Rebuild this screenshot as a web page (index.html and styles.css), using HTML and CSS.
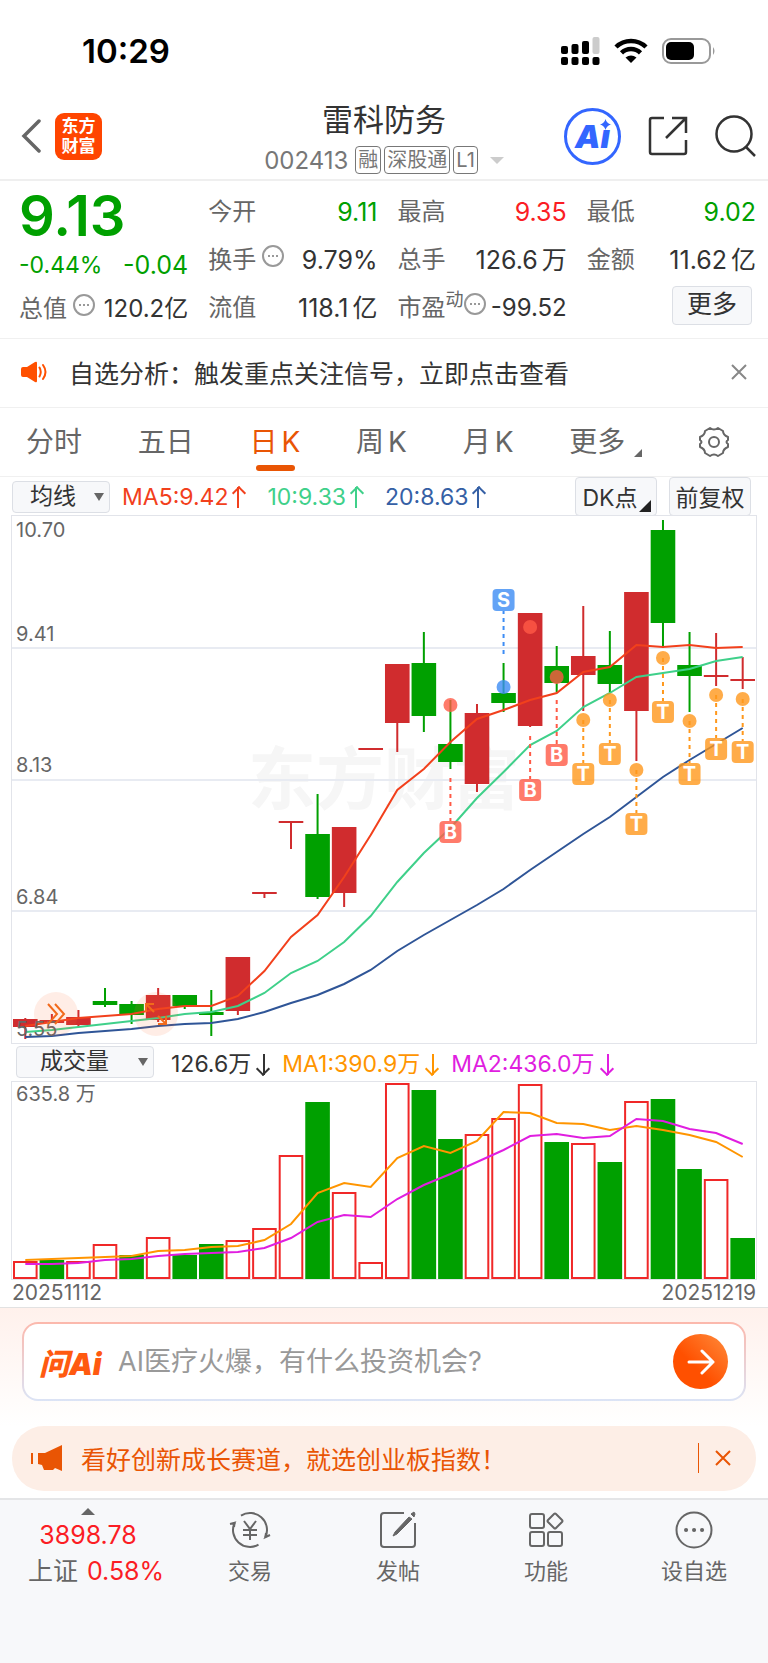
FILE: index.html
```html
<!DOCTYPE html>
<html lang="zh-CN">

<head>
    <meta charset="UTF-8">
    <meta name="viewport" content="width=device-width, initial-scale=1.0">
    <title>雷科防务</title>
    <link rel="stylesheet" href="styles.css">
</head>

<body>
    <div class="status-bar">
        <span class="time">10:29</span>
        <div class="status-icons">
            <svg class="signal" width="39" height="28" viewBox="0 0 39 28">
                <rect x="0" y="9" width="7" height="8" rx="2" />
                <rect x="10.500" y="7" width="7" height="10" rx="2" />
                <rect x="21" y="4" width="7" height="13" rx="2" />
                <rect x="31.500" y="0" width="7" height="17" rx="2" fill="#ccc" />
                <rect x="0" y="20" width="7" height="8" rx="2" />
                <rect x="10.500" y="20" width="7" height="8" rx="2" />
                <rect x="21" y="20" width="7" height="8" rx="2" />
                <rect x="31.500" y="20" width="7" height="8" rx="2" />
            </svg>
            <svg width="34" height="25" viewBox="0 0 34 25" fill="none" stroke="#000" stroke-width="4.500">
                <path d="M2 9a21.500 21.500 0 0 1 30 0" />
                <path d="M7.500 14.800a13.500 13.500 0 0 1 19 0" />
                <path d="M11.500 19.500Q17 15.500 22.500 19.500L17 25z" fill="#000" stroke="none" />
            </svg>
            <svg width="54" height="26" viewBox="0 0 54 26">
                <rect x="1" y="1" width="47" height="24" rx="8" fill="none" stroke="#999" stroke-width="2" />
                <rect x="4" y="4" width="28" height="18" rx="5" />
                <path d="M51 9q3 4 0 8z" fill="#999" />
            </svg>
        </div>
    </div>

    <header class="nav">
        <div class="nav-left">
            <button class="icon-btn" aria-label="返回">
                <svg width="20" height="36" viewBox="0 0 20 36" fill="none" stroke="#666" stroke-width="3.500"
                    stroke-linecap="round">
                    <path d="M18 3L3 18l15 15" />
                </svg>
            </button>
            <a class="logo" href="#">东方<br>财富</a>
        </div>
        <div class="nav-title">
            <h1>雷科防务</h1>
            <div class="code">
                <span>002413</span>
                <span class="badge">融</span>
                <span class="badge">深股通</span>
                <span class="badge">L1</span>
                <i class="caret"></i>
            </div>
        </div>
        <div class="nav-right">
            <button class="ai-btn" aria-label="Ai">
                <span>Ai</span>
                <svg class="star" width="11" height="11" viewBox="0 0 10 10" fill="#36f">
                    <path d="M5 0Q6 4 10 5Q6 6 5 10Q4 6 0 5Q4 4 5 0z" />
                </svg>
            </button>
            <button class="icon-btn" aria-label="分享">
                <svg width="40" height="40" viewBox="0 0 40 40" fill="none" stroke="#333" stroke-width="2.500">
                    <path d="M16 2H4Q2 2 2 4V36Q2 38 4 38H36Q38 38 38 36V24M24 2H38V17M38 2L18 22" />
                </svg>
            </button>
            <button class="icon-btn" aria-label="搜索">
                <svg width="41" height="42" viewBox="0 0 41 42" fill="none" stroke="#333" stroke-width="2.500">
                    <circle cx="19" cy="19" r="17.500" />
                    <path d="M31 32l9 9" />
                </svg>
            </button>
        </div>
    </header>

    <section class="quote">
        <div class="quote-main">
            <div class="price">9.13</div>
            <div class="change"><span class="rate">-0.44%</span><span>-0.04</span></div>
            <div class="item">
                <span class="label">总值</span>
                <i class="more-dot"></i>
                <span class="value compact">120.2亿</span>
            </div>
        </div>
        <div class="quote-grid">
            <div class="item"><span class="label">今开</span><span class="value down">9.11</span></div>
            <div class="item"><span class="label">最高</span><span class="value up">9.35</span></div>
            <div class="item"><span class="label">最低</span><span class="value down">9.02</span></div>
            <div class="item"><span class="label">换手</span><i class="more-dot"></i><span
                    class="value">9.79%</span></div>
            <div class="item"><span class="label">总手</span><span class="value">126.6<span
                        class="unit">万</span></span></div>
            <div class="item"><span class="label">金额</span><span class="value">11.62<span
                        class="unit">亿</span></span></div>
            <div class="item"><span class="label">流值</span><span class="value">118.1<span
                        class="unit">亿</span></span></div>
            <div class="item"><span class="label">市盈<sup>动</sup></span><i class="more-dot"></i><span
                    class="value compact">-99.52</span></div>
            <div class="item"><button class="btn-more">更多</button></div>
        </div>
    </section>

    <div class="notice">
        <svg width="26" height="22" viewBox="0 0 26 22" fill="#ff5000">
            <path d="M2 6H6L14 1Q16 0 16 2V20Q16 22 14 21L6 16H2Q0 16 0 14V8Q0 6 2 6z" />
            <path d="M18.500 6.500Q21 11 18.500 15.500M22 4Q27 11 22 18" fill="none" stroke="#ff5000" stroke-width="2"
                stroke-linecap="round" />
        </svg>
        <a href="#">自选分析：触发重点关注信号，立即点击查看</a>
        <button class="icon-btn" aria-label="关闭">
            <svg width="16" height="16" viewBox="0 0 16 16" stroke="#888" stroke-width="2">
                <path d="M1 1l14 14M15 1L1 15" />
            </svg>
        </button>
    </div>

    <nav class="tabs">
        <button>分时</button>
        <button>五日</button>
        <button class="active">日<span class="unit">K</span></button>
        <button>周<span class="unit">K</span></button>
        <button>月<span class="unit">K</span></button>
        <button class="tab-more">更多</button>
        <button class="gear" aria-label="设置">
            <svg width="32" height="32" viewBox="0 0 32 32" fill="none" stroke="#666" stroke-width="2">
                <path
                    d="M12 2Q16 5 20 2L25 5Q25 9 30 11V14Q27 16 30 18V21Q25 23 25 27L20 30Q16 27 12 30L7 27Q7 23 2 21V18Q5 16 2 14V11Q7 9 7 5z"
                    stroke-linejoin="round" />
                <circle cx="16" cy="16" r="5" />
            </svg>
        </button>
    </nav>

    <div class="ma-bar">
        <div class="select select-ma">
            <select aria-label="指标">
                <option>均线</option>
            </select>
        </div>
        <span class="ma5">MA5:9.42<i class="arrow"></i></span>
        <span class="ma10">10:9.33<i class="arrow"></i></span>
        <span class="ma20">20:8.63<i class="arrow"></i></span>
        <div class="ma-btns">
            <button class="dk">DK点</button>
            <button>前复权</button>
        </div>
    </div>

    <main class="charts">
        <div class="k-wrap">
            <svg class="k-chart" viewBox="0 0 744 527"></svg>
            <div class="chart-tools">
                <button aria-label="展开">
                    <svg width="20" height="22" viewBox="0 0 20 22" fill="none" stroke="#f26a1b" stroke-width="2">
                        <path d="M2 1l9 10-9 10M9 1l9 10-9 10" />
                    </svg>
                </button>
                <button aria-label="全屏">
                    <svg width="22" height="22" viewBox="0 0 22 22" fill="none" stroke="#f26a1b" stroke-width="2">
                        <path d="M9 1H1V9M1 1l8 8M13 21H21V13M21 21l-8-8" />
                    </svg>
                </button>
            </div>
        </div>
        <div class="vol-bar">
            <div class="select select-vol">
                <select aria-label="副图指标">
                    <option>成交量</option>
                </select>
            </div>
            <span>126.6万<i class="arrow arrow-down"></i></span>
            <span class="vol-ma1">MA1:390.9万<i class="arrow arrow-down"></i></span>
            <span class="vol-ma2">MA2:436.0万<i class="arrow arrow-down"></i></span>
        </div>
        <svg class="vol-chart" viewBox="0 0 744 197"></svg>
        <div class="dates"><span>20251112</span><span>20251219</span></div>
    </main>

    <section class="ask">
        <form class="ask-box">
            <label for="ask-input">问Ai</label>
            <input id="ask-input" type="text" placeholder="AI医疗火爆，有什么投资机会?">
            <button type="button" aria-label="发送">
                <svg width="28" height="26" viewBox="0 0 28 26" fill="none" stroke="#fff" stroke-width="3"
                    stroke-linecap="round" stroke-linejoin="round">
                    <path d="M2 13H26M15 2l11 11-11 11" />
                </svg>
            </button>
        </form>
    </section>

    <div class="banner">
        <svg width="31" height="26" viewBox="0 0 31 26" fill="#e95504">
            <path d="M0 8H2V19H0zM7 8H14L31 0V26L24 23L22 25H13L11 20L7 19z" />
        </svg>
        <a href="#">看好创新成长赛道，就选创业板指数！</a>
        <button class="icon-btn" aria-label="关闭">
            <svg width="16" height="16" viewBox="0 0 16 16" stroke="#e95504" stroke-width="2">
                <path d="M1 1l14 14M15 1L1 15" />
            </svg>
        </button>
    </div>

    <footer class="footer">
        <a class="index" href="#">
            <i class="caret caret-up"></i>
            <span class="up">3898.78</span>
            <span class="index-rate">上证 <b class="up">0.58%</b></span>
        </a>
        <a href="#">
            <svg width="42" height="38" viewBox="0 0 42 38" fill="none" stroke="#666" stroke-width="2">
                <path d="M12 4.600A17 17 0 0 1 36.400 26.200L41 24M29.500 33.700A17 17 0 0 1 5.600 11.800L1 13" />
                <path d="M36.400 26.200L37 22M5.600 11.800L5 16" />
                <path d="M15 10l6 8 6-8M14 19H28M14 24H28M21 18V29" />
            </svg>
            交易
        </a>
        <a href="#">
            <svg width="38" height="38" viewBox="0 0 38 38" fill="none" stroke="#666" stroke-width="2">
                <path d="M25 2H5Q2 2 2 5V33Q2 36 5 36H33Q36 36 36 33V12" />
                <path d="M16 21L30 6L33 8L18 23L14 25zM32 3L35 1L36 3L35 6z" fill="#666" stroke-width="1" />
            </svg>
            发帖
        </a>
        <a href="#">
            <svg width="36" height="38" viewBox="0 0 36 38" fill="none" stroke="#666" stroke-width="2">
                <rect x="2" y="3" width="14" height="14" rx="2" />
                <rect x="2" y="21" width="14" height="14" rx="2" />
                <rect x="20" y="21" width="14" height="14" rx="2" />
                <path d="M26 3Q27 2 28 3L34 9Q35 10 34 11L28 17Q27 18 26 17L20 11Q19 10 20 9z" />
            </svg>
            功能
        </a>
        <a href="#">
            <svg width="38" height="38" viewBox="0 0 38 38" fill="none" stroke="#666" stroke-width="2">
                <circle cx="19" cy="19" r="17.500" />
                <path d="M11 19h.1M19 19h.1M27 19h.1" stroke-width="4" stroke-linecap="round" />
            </svg>
            设自选
        </a>
    </footer>
    <script src="chart.js"></script>
</body>

</html>
```
FILE: styles.css
```css
* {
    box-sizing: border-box;
}

body {
    margin: 0;
    min-height: 100vh;
    display: flex;
    flex-direction: column;
    background-color: #fff;
    color: #333;
    font-family: Inter, "Noto Sans CJK SC", sans-serif;
    font-size: 24px;
}

button,
select,
input {
    font: inherit;
    color: inherit;
    border: 0;
    padding: 0;
    background: none;
    outline: none;
}

button {
    cursor: pointer;
}

a {
    color: inherit;
    text-decoration: none;
}

svg {
    display: block;
    flex: none;
}

.up {
    color: #fb1d24;
}

.down {
    color: #00a000;
}

.icon-btn {
    display: flex;
}

/* 状态栏 */
.status-bar {
    height: 103px;
    padding: 0 52px 2px 82px;
    display: flex;
    align-items: center;
    justify-content: space-between;
}

.time {
    font-size: 33px;
    font-weight: 600;
    color: #000;
}

.status-icons {
    display: flex;
    align-items: center;
    gap: 14px;
}

/* 顶部导航 */
.nav {
    height: 78px;
    padding: 0 12px;
    display: grid;
    grid-template-columns: 1fr auto 1fr;
    align-items: center;
    border-bottom: 2px solid #efefef;
}

.nav-left,
.nav-right {
    display: flex;
    align-items: center;
    padding-bottom: 10px;
}

.nav-left {
    gap: 14px;
    padding-left: 9px;
}

.nav-right {
    justify-content: flex-end;
    gap: 27px;
}

.logo {
    width: 47px;
    height: 47px;
    padding-top: 3px;
    border-radius: 9px;
    background-color: #ff4500;
    color: #fff;
    font-size: 17px;
    font-weight: 700;
    line-height: 20px;
    text-align: center;
}

.nav-title {
    text-align: center;
}

.nav-title h1 {
    margin: 0;
    font-size: 31px;
    font-weight: 400;
    line-height: 34px;
}

.code {
    display: flex;
    align-items: center;
    justify-content: center;
    gap: 3px;
    height: 38px;
    margin-top: 4px;
    font-size: 24px;
    color: #777;
}

.badge {
    padding: 0 2px;
    border: 1px solid #777;
    border-radius: 4px;
    font-size: 20px;
    line-height: 26px;
}

.code .badge:nth-child(2) {
    margin-left: 4px;
}

.caret {
    border: 7px solid transparent;
    border-top-color: #ccc;
    border-bottom: 0;
}

.code .caret {
    margin-left: 9px;
}

.ai-btn {
    position: relative;
    width: 57px;
    height: 57px;
    padding-top: 2px;
    border: 3px solid #36f;
    border-radius: 50%;
    color: #36f;
    font-size: 32px;
    font-style: italic;
    font-weight: 900;
    line-height: 48px;
}

.ai-btn .star {
    position: absolute;
    top: 8px;
    right: 7px;
    background-color: #fff;
}

/* 行情数据 */
.quote {
    display: flex;
    gap: 20px;
    padding: 7px 12px 6px 19px;
    border-bottom: 1px solid #f0f0f0;
}

.quote-main {
    flex: 169;
}

.price {
    font-size: 56px;
    font-weight: 600;
    line-height: 56px;
    color: #00a000;
}

.change {
    display: flex;
    justify-content: space-between;
    font-size: 25px;
    line-height: 42px;
    color: #00a000;
}

.rate {
    font-size: 23px;
}

.quote-main .item {
    height: 46px;
}

.quote-grid {
    flex: 547;
    display: grid;
    grid-template-columns: repeat(3, 1fr);
    grid-auto-rows: 48px;
    column-gap: 20px;
}

.item {
    display: flex;
    align-items: center;
    line-height: 32px;
    white-space: nowrap;
}

.label {
    color: #666;
}

.label sup {
    font-size: 18px;
    line-height: 0;
    vertical-align: 10px;
}

.value {
    margin-left: auto;
    font-size: 25px;
}

.value.compact {
    font-size: 24px;
}

.unit {
    margin-left: 4px;
}

.more-dot {
    display: flex;
    align-items: center;
    justify-content: center;
    width: 22px;
    height: 22px;
    margin: -8px 0 0 6px;
    border: 2px solid #999;
    border-radius: 50%;
}

.label:has(sup) + .more-dot {
    margin-left: 1px;
}

.more-dot::after {
    content: '';
    width: 2px;
    height: 2px;
    background-color: #999;
    box-shadow: -4px 0 #999, 4px 0 #999;
}

.btn-more {
    width: 80px;
    height: 39px;
    margin: 0 4px 6px auto;
    padding-bottom: 2px;
    border: 1px solid #dcdfe5;
    border-radius: 4px;
    background-color: #f7f8fa;
    font-size: 25px;
}

/* 信号提示 */
.notice {
    height: 69px;
    padding: 0 21px 2px;
    display: flex;
    align-items: center;
    gap: 22px;
    border-bottom: 1px solid #f0f0f0;
    font-size: 25px;
}

.notice a,
.banner a {
    flex: 1;
}

/* 周期切换 */
.tabs {
    height: 69px;
    padding: 0 38px 0 26px;
    display: flex;
    justify-content: space-between;
    border-bottom: 1px solid #f0f0f0;
    color: #666;
    font-size: 28px;
}

.tabs button {
    position: relative;
    padding-bottom: 4px;
}

.tabs .gear {
    padding-bottom: 0;
}

.tabs .active {
    color: #e95504;
}

.tabs .active::after {
    content: '';
    position: absolute;
    left: 50%;
    bottom: 5px;
    width: 39px;
    height: 6px;
    margin-left: -19px;
    border-radius: 3px;
    background-color: #e95504;
}

.tabs .tab-more {
    padding-right: 17px;
}

.tab-more::after,
.dk::after {
    content: '';
    position: absolute;
    right: 0;
    bottom: 19px;
    border: 4px solid transparent;
    border-right-color: #666;
    border-bottom-color: #666;
}

/* 均线指标 */
.ma-bar,
.vol-bar {
    display: flex;
    align-items: center;
    height: 39px;
    padding: 0 17px 0 12px;
    gap: 22px;
    font-size: 23px;
    white-space: nowrap;
}

.select {
    position: relative;
    height: 32px;
    border: 1px solid #dcdfe5;
    border-radius: 4px;
    background-color: #f7f8fa;
}

.select select {
    appearance: none;
    width: 100%;
    height: 28px;
    padding-left: 17px;
}

.select::after {
    content: '';
    position: absolute;
    top: 11px;
    right: 5px;
    border: 5px solid transparent;
    border-top: 8px solid #666;
    border-bottom: 0;
}

.select-ma {
    width: 98px;
    margin-right: -10px;
}

.ma5 {
    color: #f2401c;
}

.ma10 {
    color: #3fd08a;
}

.ma20 {
    color: #3560a5;
}

.arrow {
    position: relative;
    display: inline-block;
    width: 2px;
    height: 21px;
    margin: 0 6px 0 9px;
    vertical-align: -3px;
    background-color: currentColor;
}

.arrow::before {
    content: '';
    position: absolute;
    top: 1px;
    left: -3px;
    width: 8px;
    height: 8px;
    border: solid currentColor;
    border-width: 2px 0 0 2px;
    transform: rotate(45deg);
}

.arrow-down {
    transform: rotate(180deg);
    margin: 0 4px 0 12px;
}

.ma-btns {
    display: flex;
    gap: 12px;
    margin-left: auto;
}

.ma-btns button {
    position: relative;
    width: 82px;
    height: 39px;
    padding-bottom: 2px;
    border: 1px solid #dcdfe5;
    border-radius: 4px;
    background-color: #f7f8fa;
}

.ma-btns .dk {
    padding-right: 12px;
}

.dk::after {
    right: 5px;
    bottom: 3px;
    border-width: 6px;
    border-right-color: #222;
    border-bottom-color: #222;
}

/* 图表 */
.charts {
    padding: 0 12px;
}

.k-wrap {
    position: relative;
}

.k-chart,
.vol-chart {
    width: 100%;
    height: auto;
    overflow: visible;
    outline: 1px solid #e2e4ea;
}

.axis {
    font-size: 20px;
    fill: #666;
}

.watermark {
    font-size: 68px;
    font-weight: 700;
    fill: #f6f6f6;
}

.tag {
    font-size: 20px;
    font-weight: 700;
    fill: #fff;
    text-anchor: middle;
}

.chart-tools {
    position: absolute;
    left: 3%;
    bottom: 7px;
    display: flex;
    gap: 56px;
}

.chart-tools button {
    display: flex;
    align-items: center;
    justify-content: center;
    width: 44px;
    height: 44px;
    border-radius: 50%;
    background-color: rgba(255, 110, 50, .12);
}

.vol-bar {
    padding: 0 4px 2px;
    gap: 13px;
}

.select-vol {
    width: 138px;
    margin-right: 4px;
}

.select-vol select {
    padding-left: 23px;
}

.vol-ma1 {
    color: #ff9500;
}

.vol-ma2 {
    color: #e01ee0;
}

.dates {
    display: flex;
    justify-content: space-between;
    height: 28px;
    font-size: 21px;
    line-height: 27px;
    color: #666;
}

/* 问AI */
.ask {
    padding: 14px 22px 25px;
    border-top: 1px solid #e2e2e2;
    background: linear-gradient(#fff1ec, #fff);
}

.ask-box {
    display: flex;
    align-items: center;
    height: 79px;
    padding: 0 16px 0 15px;
    border: 2px solid transparent;
    border-radius: 16px;
    background: linear-gradient(#fff, #fff) padding-box, linear-gradient(#fcb8ac, #dbe4f6) border-box;
}

.ask-box label {
    width: 79px;
    font-size: 30px;
    font-style: italic;
    font-weight: 900;
    color: #ff5a10;
}

.ask-box input {
    flex: 1;
    min-width: 0;
    font-size: 27px;
}

.ask-box input::placeholder {
    color: #999;
}

.ask-box button {
    display: flex;
    align-items: center;
    justify-content: center;
    width: 55px;
    height: 55px;
    border-radius: 50%;
    background: linear-gradient(45deg, #ff5000 40%, #ff8c3c);
}

/* 广告条 */
.banner {
    height: 65px;
    margin: 0 12px 7px;
    padding: 0 25px 2px 19px;
    display: flex;
    align-items: center;
    gap: 19px;
    border-radius: 32px;
    background-color: #fdeee6;
    color: #e95504;
    font-size: 25px;
}

.banner .icon-btn {
    padding: 7px 0 7px 16px;
    border-left: 1px solid #e95504;
}

/* 底部菜单 */
.footer {
    flex: 1;
    min-height: 165px;
    display: flex;
    border-top: 2px solid #e4e5e7;
    background-color: #f7f8fa;
    color: #666;
    font-size: 22px;
    line-height: 32px;
}

.footer a {
    flex: 148;
    display: flex;
    flex-direction: column;
    align-items: center;
    gap: 6px;
    padding-top: 11px;
}

.footer .index {
    flex: 176;
    gap: 4px;
    padding-top: 8px;
    font-size: 25px;
}

.index-rate {
    padding-left: 16px;
}

.footer b {
    margin-left: 2px;
    font-weight: 400;
}

.caret-up {
    border: 7px solid transparent;
    border-bottom-color: #666;
    border-top: 0;
}
```
FILE: chart.js
```js
const STEP = 26.57
const FIRST = 13.3
const BAR = 24.6
const RED = '#d02c2e'
const GREEN = '#00a000'

// 颜色, 实体上沿, 实体下沿, 最高, 最低
const candles = [
    ['r', 503, 511, 502, 523], ['r', 504, 507, 498, 507], ['r', 501, 509, 494, 511], ['g', 485, 489, 472, 491],
    ['g', 488, 499, 485, 508], ['r', 479, 504, 472, 506], ['g', 479, 490, 479, 493], ['g', 496, 499, 474, 520],
    ['r', 441, 495, 441, 499], ['r', 376, 378, 376, 382], ['r', 305, 307, 305, 333], ['g', 318, 381, 278, 383],
    ['r', 311, 377, 311, 391], ['r', 232, 234, 232, 234], ['r', 148, 207, 148, 236], ['g', 147, 200, 116, 216],
    ['g', 228, 246, 184, 253], ['r', 197, 268, 188, 276], ['g', 177, 187, 147, 196], ['r', 97, 210, 97, 211],
    ['g', 150, 167, 130, 176], ['r', 140, 159, 90, 195], ['g', 149, 168, 115, 176], ['r', 76, 195, 76, 245],
    ['g', 14, 107, 4, 132], ['g', 149, 160, 116, 196], ['r', 159, 161, 117, 170], ['r', 163, 165, 141, 173]
]
const ma5 = [510, 506, 502, 500, 498, 493, 490, 490, 480, 455, 421, 399, 361, 319, 274, 253, 226, 203, 194, 184, 177, 156, 151, 129, 131, 129, 132, 131]
const ma10 = [516, 514, 511, 508, 505, 502, 498, 496, 490, 477, 457, 445, 426, 400, 366, 337, 312, 282, 256, 229, 215, 191, 177, 161, 157, 153, 145, 141]
const ma20 = [521, 520, 517, 515, 513, 510, 508, 507, 503, 496, 487, 479, 468, 454, 435, 419, 404, 389, 373, 354, 336, 318, 301, 281, 261, 244, 228, 212]

// 序号, 圆点, 标签, 字母, 虚线起点
const marks = [
    [16, 189, 316, 'B', 262], [18, 171, 84, 'S', 138], [19, 111, 274, 'B', 220], [20, 161, 239, 'B', 184],
    [21, 204, 258, 'T'], [22, 184, 238, 'T'], [23, 254, 308, 'T'], [24, 142, 196, 'T'],
    [25, 205, 258, 'T'], [26, 179, 233, 'T'], [27, 183, 236, 'T']
]
const markColors = { B: '#ff5a46', S: '#3d8df5', T: '#ff981c' }

const volumes = [179, 178, 179, 162, 173, 155, 173, 162, 158, 146, 73, 20, 110, 180, 1, 8, 57, 52, 36, 2, 60, 61, 80, 19, 17, 87, 97, 156]
const volColors = 'rgrrgrggrrrgrrrggrrrgrgrggrg'
const volMa1 = [178, 177, 176, 175, 174, 169, 168, 165, 164, 158, 142, 111, 101, 105, 76, 64, 71, 59, 30, 31, 41, 42, 48, 44, 48, 53, 60, 75]
const volMa2 = [182, 182, 181, 178, 177, 174, 172, 171, 170, 166, 156, 140, 133, 135, 117, 103, 92, 80, 68, 54, 52, 56, 54, 37, 39, 47, 51, 62]

function x(i) {
    return FIRST + i * STEP
}

function rect(left, top, w, h, color) {
    return `<rect x="${left}" y="${top}" width="${w}" height="${h}" fill="${color}"/>`
}

function line(points, color) {
    let list = points.map((y, i) => x(i) + ',' + y).join(' ')
    return `<polyline points="${list}" fill="none" stroke="${color}" stroke-width="2"/>`
}

function label(y, text) {
    return `<text class="axis" x="4" y="${y}">${text}</text>`
}

function drawK() {
    let html = '<text class="watermark" x="236" y="288">东方财富</text>'
    for (let y of [132, 264, 395]) {
        html += rect(0, y - 1, 744, 2, '#e8ebf2')
    }
    candles.forEach(([c, top, bottom, high, low], i) => {
        let color = c === 'r' ? RED : GREEN
        html += rect(x(i) - 1, high, 2, low - high, color)
        html += rect(x(i) - BAR / 2, top, BAR, bottom - top, color)
    })
    html += line(ma20, '#2f5597') + line(ma10, '#3fd08a') + line(ma5, '#f2401c')
    for (let [i, dot, y, letter, from = dot] of marks) {
        let color = markColors[letter]
        let end = y > from ? y - 11 : y + 11
        html += `<path d="M${x(i)} ${from}V${end}" stroke="${color}" stroke-width="2" stroke-dasharray="4 4"/>`
        html += `<g opacity=".8"><circle cx="${x(i)}" cy="${dot}" r="7" fill="${color}"/>`
        html += `<rect x="${x(i) - 11}" y="${y - 11}" width="22" height="22" rx="4" fill="${color}"/></g>`
        html += `<text class="tag" x="${x(i)}" y="${y + 7}">${letter}</text>`
    }
    html += label(21, '10.70') + label(125, '9.41') + label(256, '8.13') + label(388, '6.84') + label(520, '5.55')
    document.querySelector('.k-chart').innerHTML = html
}

function drawVolume() {
    let html = ''
    volumes.forEach((top, i) => {
        if (volColors[i] === 'g') {
            html += rect(x(i) - BAR / 2, top, BAR, 197 - top, GREEN)
        } else {
            html += `<rect x="${x(i) - BAR / 2 + 1}" y="${top + 1}" width="${BAR - 2}" height="${195 - top}" fill="none" stroke="#f02828" stroke-width="2"/>`
        }
    })
    html += line(volMa1, '#ff9500') + line(volMa2, '#e01ee0') + label(19, '635.8 万')
    document.querySelector('.vol-chart').innerHTML = html
}

drawK()
drawVolume()
```
